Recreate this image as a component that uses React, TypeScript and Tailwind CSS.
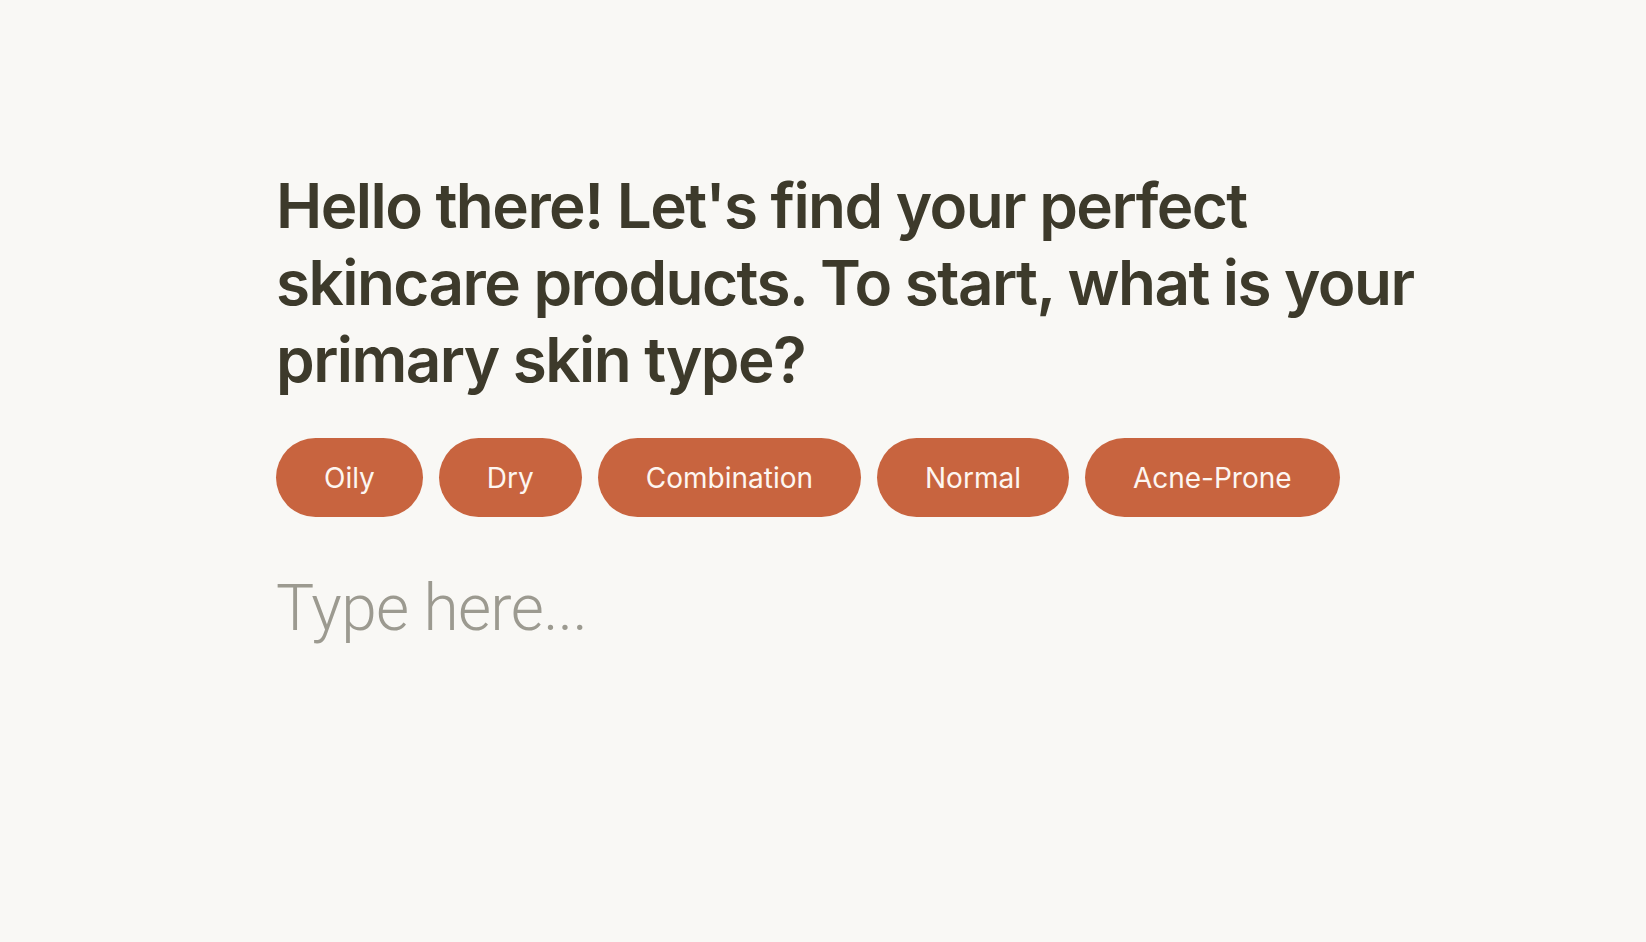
import React, { useState } from "react";

const SKIN_TYPES = ["Oily", "Dry", "Combination", "Normal", "Acne-Prone"];

export default function App(): JSX.Element {
  const [value, setValue] = useState("");

  return (
    <div className="min-h-screen w-full bg-[#f9f8f5] font-['Inter',sans-serif]">
      <div className="pl-[276px] pt-[167px]">
        <h1 className="w-[1180px] text-[62px] font-semibold leading-[77px] tracking-[-0.025em] text-[#3d3a2b]">
          Hello there! Let's find your perfect skincare products. To start, what is your primary skin type?
        </h1>

        <div className="mt-[40px] flex flex-wrap gap-4">
          {SKIN_TYPES.map((label) => (
            <button
              key={label}
              onClick={() => setValue(label)}
              className="h-[79px] rounded-full bg-[#c8643f] px-12 text-[28px] font-normal text-[#fdf6f1]"
            >
              {label}
            </button>
          ))}
        </div>

        <input
          value={value}
          onChange={(event) => setValue(event.target.value)}
          placeholder="Type here..."
          className="mt-[56px] w-[1000px] bg-transparent font-['Roboto',sans-serif] text-[64px] font-light leading-[72px] tracking-[-0.01em] text-[#3d3a2b] outline-none placeholder:text-[#9c9a90]"
        />
      </div>
    </div>
  );
}
